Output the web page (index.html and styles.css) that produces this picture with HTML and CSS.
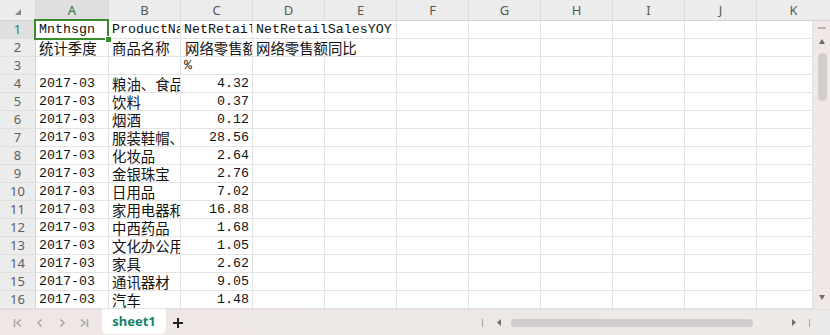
FILE: index.html
```html
<!DOCTYPE html>
<html lang="zh">
<head>
<meta charset="utf-8">
<link rel="stylesheet" href="styles.css">
</head>
<body>
<div class="app">
  <div class="sheet">
    <div class="ch corner"><svg width="6" height="6" viewBox="0 0 6 6"><polygon points="6,0 6,6 0,6" fill="#8a8a8a"/></svg></div>
    <div class="ch sel">A</div><div class="ch">B</div><div class="ch">C</div><div class="ch">D</div><div class="ch">E</div><div class="ch">F</div><div class="ch">G</div><div class="ch">H</div><div class="ch">I</div><div class="ch">J</div><div class="ch klast">K</div>

    <div class="rh sel">1</div><div class="c">Mnthsgn</div><div class="c">ProductName</div><div class="c">NetRetailSales</div><div class="c span2">NetRetailSalesYOY</div><div class="c"></div><div class="c"></div><div class="c"></div><div class="c"></div><div class="c"></div><div class="c"></div>
    <div class="vscroll">
      <span class="vdash"></span>
      <svg class="vup" width="6" height="5" viewBox="0 0 6 5"><polygon points="3,0 6,5 0,5" fill="#6e6e6e"/></svg>
      <span class="vthumb"></span>
      <svg class="vdown" width="6" height="5" viewBox="0 0 6 5"><polygon points="0,0 6,0 3,5" fill="#6e6e6e"/></svg>
    </div>

    <div class="rh">2</div><div class="c"><span class="zh">统计季度</span></div><div class="c"><span class="zh">商品名称</span></div><div class="c ind"><span class="zh">网络零售额</span></div><div class="c span2"><span class="zh">网络零售额同比</span></div><div class="c"></div><div class="c"></div><div class="c"></div><div class="c"></div><div class="c"></div><div class="c"></div>

    <div class="rh">3</div><div class="c"></div><div class="c"></div><div class="c">%</div><div class="c"></div><div class="c"></div><div class="c"></div><div class="c"></div><div class="c"></div><div class="c"></div><div class="c"></div><div class="c"></div>

    <div class="rh">4</div><div class="c">2017-03</div><div class="c"><span class="zh">粮油、食品类</span></div><div class="c num">4.32</div><div class="c"></div><div class="c"></div><div class="c"></div><div class="c"></div><div class="c"></div><div class="c"></div><div class="c"></div><div class="c"></div>
    <div class="rh">5</div><div class="c">2017-03</div><div class="c"><span class="zh">饮料</span></div><div class="c num">0.37</div><div class="c"></div><div class="c"></div><div class="c"></div><div class="c"></div><div class="c"></div><div class="c"></div><div class="c"></div><div class="c"></div>
    <div class="rh">6</div><div class="c">2017-03</div><div class="c"><span class="zh">烟酒</span></div><div class="c num">0.12</div><div class="c"></div><div class="c"></div><div class="c"></div><div class="c"></div><div class="c"></div><div class="c"></div><div class="c"></div><div class="c"></div>
    <div class="rh">7</div><div class="c">2017-03</div><div class="c"><span class="zh">服装鞋帽、针纺织品类</span></div><div class="c num">28.56</div><div class="c"></div><div class="c"></div><div class="c"></div><div class="c"></div><div class="c"></div><div class="c"></div><div class="c"></div><div class="c"></div>
    <div class="rh">8</div><div class="c">2017-03</div><div class="c"><span class="zh">化妆品</span></div><div class="c num">2.64</div><div class="c"></div><div class="c"></div><div class="c"></div><div class="c"></div><div class="c"></div><div class="c"></div><div class="c"></div><div class="c"></div>
    <div class="rh">9</div><div class="c">2017-03</div><div class="c"><span class="zh">金银珠宝</span></div><div class="c num">2.76</div><div class="c"></div><div class="c"></div><div class="c"></div><div class="c"></div><div class="c"></div><div class="c"></div><div class="c"></div><div class="c"></div>
    <div class="rh">10</div><div class="c">2017-03</div><div class="c"><span class="zh">日用品</span></div><div class="c num">7.02</div><div class="c"></div><div class="c"></div><div class="c"></div><div class="c"></div><div class="c"></div><div class="c"></div><div class="c"></div><div class="c"></div>
    <div class="rh">11</div><div class="c">2017-03</div><div class="c"><span class="zh">家用电器和音像器材类</span></div><div class="c num">16.88</div><div class="c"></div><div class="c"></div><div class="c"></div><div class="c"></div><div class="c"></div><div class="c"></div><div class="c"></div><div class="c"></div>
    <div class="rh">12</div><div class="c">2017-03</div><div class="c"><span class="zh">中西药品</span></div><div class="c num">1.68</div><div class="c"></div><div class="c"></div><div class="c"></div><div class="c"></div><div class="c"></div><div class="c"></div><div class="c"></div><div class="c"></div>
    <div class="rh">13</div><div class="c">2017-03</div><div class="c"><span class="zh">文化办公用品</span></div><div class="c num">1.05</div><div class="c"></div><div class="c"></div><div class="c"></div><div class="c"></div><div class="c"></div><div class="c"></div><div class="c"></div><div class="c"></div>
    <div class="rh">14</div><div class="c">2017-03</div><div class="c"><span class="zh">家具</span></div><div class="c num">2.62</div><div class="c"></div><div class="c"></div><div class="c"></div><div class="c"></div><div class="c"></div><div class="c"></div><div class="c"></div><div class="c"></div>
    <div class="rh">15</div><div class="c">2017-03</div><div class="c"><span class="zh">通讯器材</span></div><div class="c num">9.05</div><div class="c"></div><div class="c"></div><div class="c"></div><div class="c"></div><div class="c"></div><div class="c"></div><div class="c"></div><div class="c"></div>
    <div class="rh">16</div><div class="c">2017-03</div><div class="c"><span class="zh">汽车</span></div><div class="c num">1.48</div><div class="c"></div><div class="c"></div><div class="c"></div><div class="c"></div><div class="c"></div><div class="c"></div><div class="c"></div><div class="c"></div>

    <div class="selbox"><span class="handle"></span></div>
  </div>

  <div class="tabbar">
    <div class="nav">
      <svg width="10" height="10" viewBox="0 0 10 10"><path d="M1.5 1v8M8 1.5 4 5l4 3.5" stroke="#a9a9a9" stroke-width="1.6" fill="none"/></svg>
      <svg width="10" height="10" viewBox="0 0 10 10"><path d="M6.5 1.5 3 5l3.5 3.5" stroke="#a9a9a9" stroke-width="1.6" fill="none"/></svg>
      <svg width="10" height="10" viewBox="0 0 10 10"><path d="M3.5 1.5 7 5 3.5 8.5" stroke="#a9a9a9" stroke-width="1.6" fill="none"/></svg>
      <svg width="10" height="10" viewBox="0 0 10 10"><path d="M2 1.5 6 5 2 8.5M8.5 1v8" stroke="#a9a9a9" stroke-width="1.6" fill="none"/></svg>
    </div>
    <div class="tab">sheet1</div>
    <svg class="plus" width="10" height="10" viewBox="0 0 10 10"><path d="M5 0v10M0 5h10" stroke="#222" stroke-width="2"/></svg>
    <div class="hscroll">
      <span class="hbar"></span>
      <svg class="hleft" width="4" height="7" viewBox="0 0 4 7"><polygon points="4,0 4,7 0,3.5" fill="#6e6e6e"/></svg>
      <span class="hthumb"></span>
      <svg class="hright" width="4" height="7" viewBox="0 0 4 7"><polygon points="0,0 4,3.5 0,7" fill="#6e6e6e"/></svg>
      <span class="hbar"></span>
    </div>
  </div>
</div>
</body>
</html>
```

FILE: styles.css
```css
html, body {
  margin: 0;
  padding: 0;
  background: #ffffff;
  font-family: "Noto Sans", "Liberation Sans", sans-serif;
}

.app {
  width: 830px;
  height: 335px;
  display: flex;
  flex-direction: column;
  overflow: hidden;
}

.sheet {
  position: relative;
  display: grid;
  grid-template-columns: 36px 73px repeat(9, 72px) 56px 17px;
  grid-template-rows: 21px repeat(16, 18px);
  height: 309px;
}

.ch {
  box-sizing: border-box;
  background: #ececec;
  border-right: 1px solid #dcdcdc;
  border-bottom: 1px solid #d4d4d4;
  font-size: 13px;
  line-height: 20px;
  text-align: center;
  color: #585858;
}

.ch.corner {
  display: flex;
  align-items: center;
  justify-content: center;
  padding: 3px 0 0 0;
}

.ch.klast {
  grid-column: span 2;
  border-right: none;
}

.ch.sel {
  background: #dfdfdf;
  color: #2a7a52;
}

.rh {
  box-sizing: border-box;
  background: #ececec;
  border-right: 1px solid #d4d4d4;
  border-bottom: 1px solid #e0e0e0;
  font-size: 13px;
  line-height: 17px;
  text-align: center;
  color: #5e5e5e;
}

.rh.sel {
  background: #dfdfdf;
  color: #2a7a72;
}

.c {
  box-sizing: border-box;
  border-right: 1px solid #e3e3e3;
  border-bottom: 1px solid #e3e3e3;
  font-family: "Liberation Mono", "Noto Sans CJK SC", monospace;
  font-size: 13.3px;
  line-height: 18px;
  padding: 0 2px 0 3px;
  white-space: nowrap;
  overflow: hidden;
  color: #111;
}

.c.span2 {
  grid-column: span 2;
}

.c.ind {
  padding-left: 4px;
}

.c.num {
  text-align: right;
  padding-right: 3px;
}

.zh {
  display: block;
  font-family: "Noto Sans CJK SC", sans-serif;
  font-size: 14.4px;
  line-height: 17px;
}

.vscroll {
  grid-column: 13;
  grid-row: 2 / span 16;
  background: #efe8e6;
  display: flex;
  flex-direction: column;
  align-items: center;
}

.vdash {
  width: 8px;
  height: 2px;
  background: #b8b2b1;
  margin-top: 6px;
}

.vup {
  margin-top: 10px;
  margin-left: 1px;
}

.vthumb {
  width: 9px;
  height: 48px;
  border-radius: 5px;
  background: #d2cdcc;
  margin-top: 9px;
  margin-left: 1px;
}

.vdown {
  margin-top: auto;
  margin-bottom: 9px;
  margin-left: 1px;
}

.selbox {
  position: absolute;
  left: 34px;
  top: 19px;
  width: 75px;
  height: 21px;
  box-sizing: border-box;
  border: 2px solid #3a8a2e;
}

.handle {
  position: absolute;
  right: -5px;
  bottom: -5px;
  width: 5px;
  height: 5px;
  background: #3a8a2e;
  border: 1px solid #fff;
}

.tabbar {
  flex: 1;
  display: flex;
  align-items: center;
  background: linear-gradient(90deg, #efe7e5, #ede8e6 60%, #eceae8);
  border-top: 1px solid #e2dcda;
  box-sizing: border-box;
}

.nav {
  display: flex;
  gap: 12px;
  padding-left: 13px;
}

.tab {
  align-self: flex-start;
  margin-left: 13px;
  width: 64px;
  height: 25px;
  margin-top: -1px;
  background: #ffffff;
  border-radius: 0 0 5px 5px;
  font-size: 13px;
  font-weight: 700;
  line-height: 25px;
  text-align: center;
  color: #17806a;
}

.plus {
  margin-left: 7px;
}

.hscroll {
  margin-left: auto;
  padding-right: 20px;
  display: flex;
  align-items: center;
}

.hbar {
  width: 1px;
  height: 8px;
  background: #a8a4a3;
}

.hleft {
  margin-left: 14px;
}

.hthumb {
  width: 242px;
  height: 8px;
  border-radius: 4px;
  background: #d2cdcc;
  margin-left: 10px;
}

.hright {
  margin-left: 39px;
  margin-right: 13px;
}
```
